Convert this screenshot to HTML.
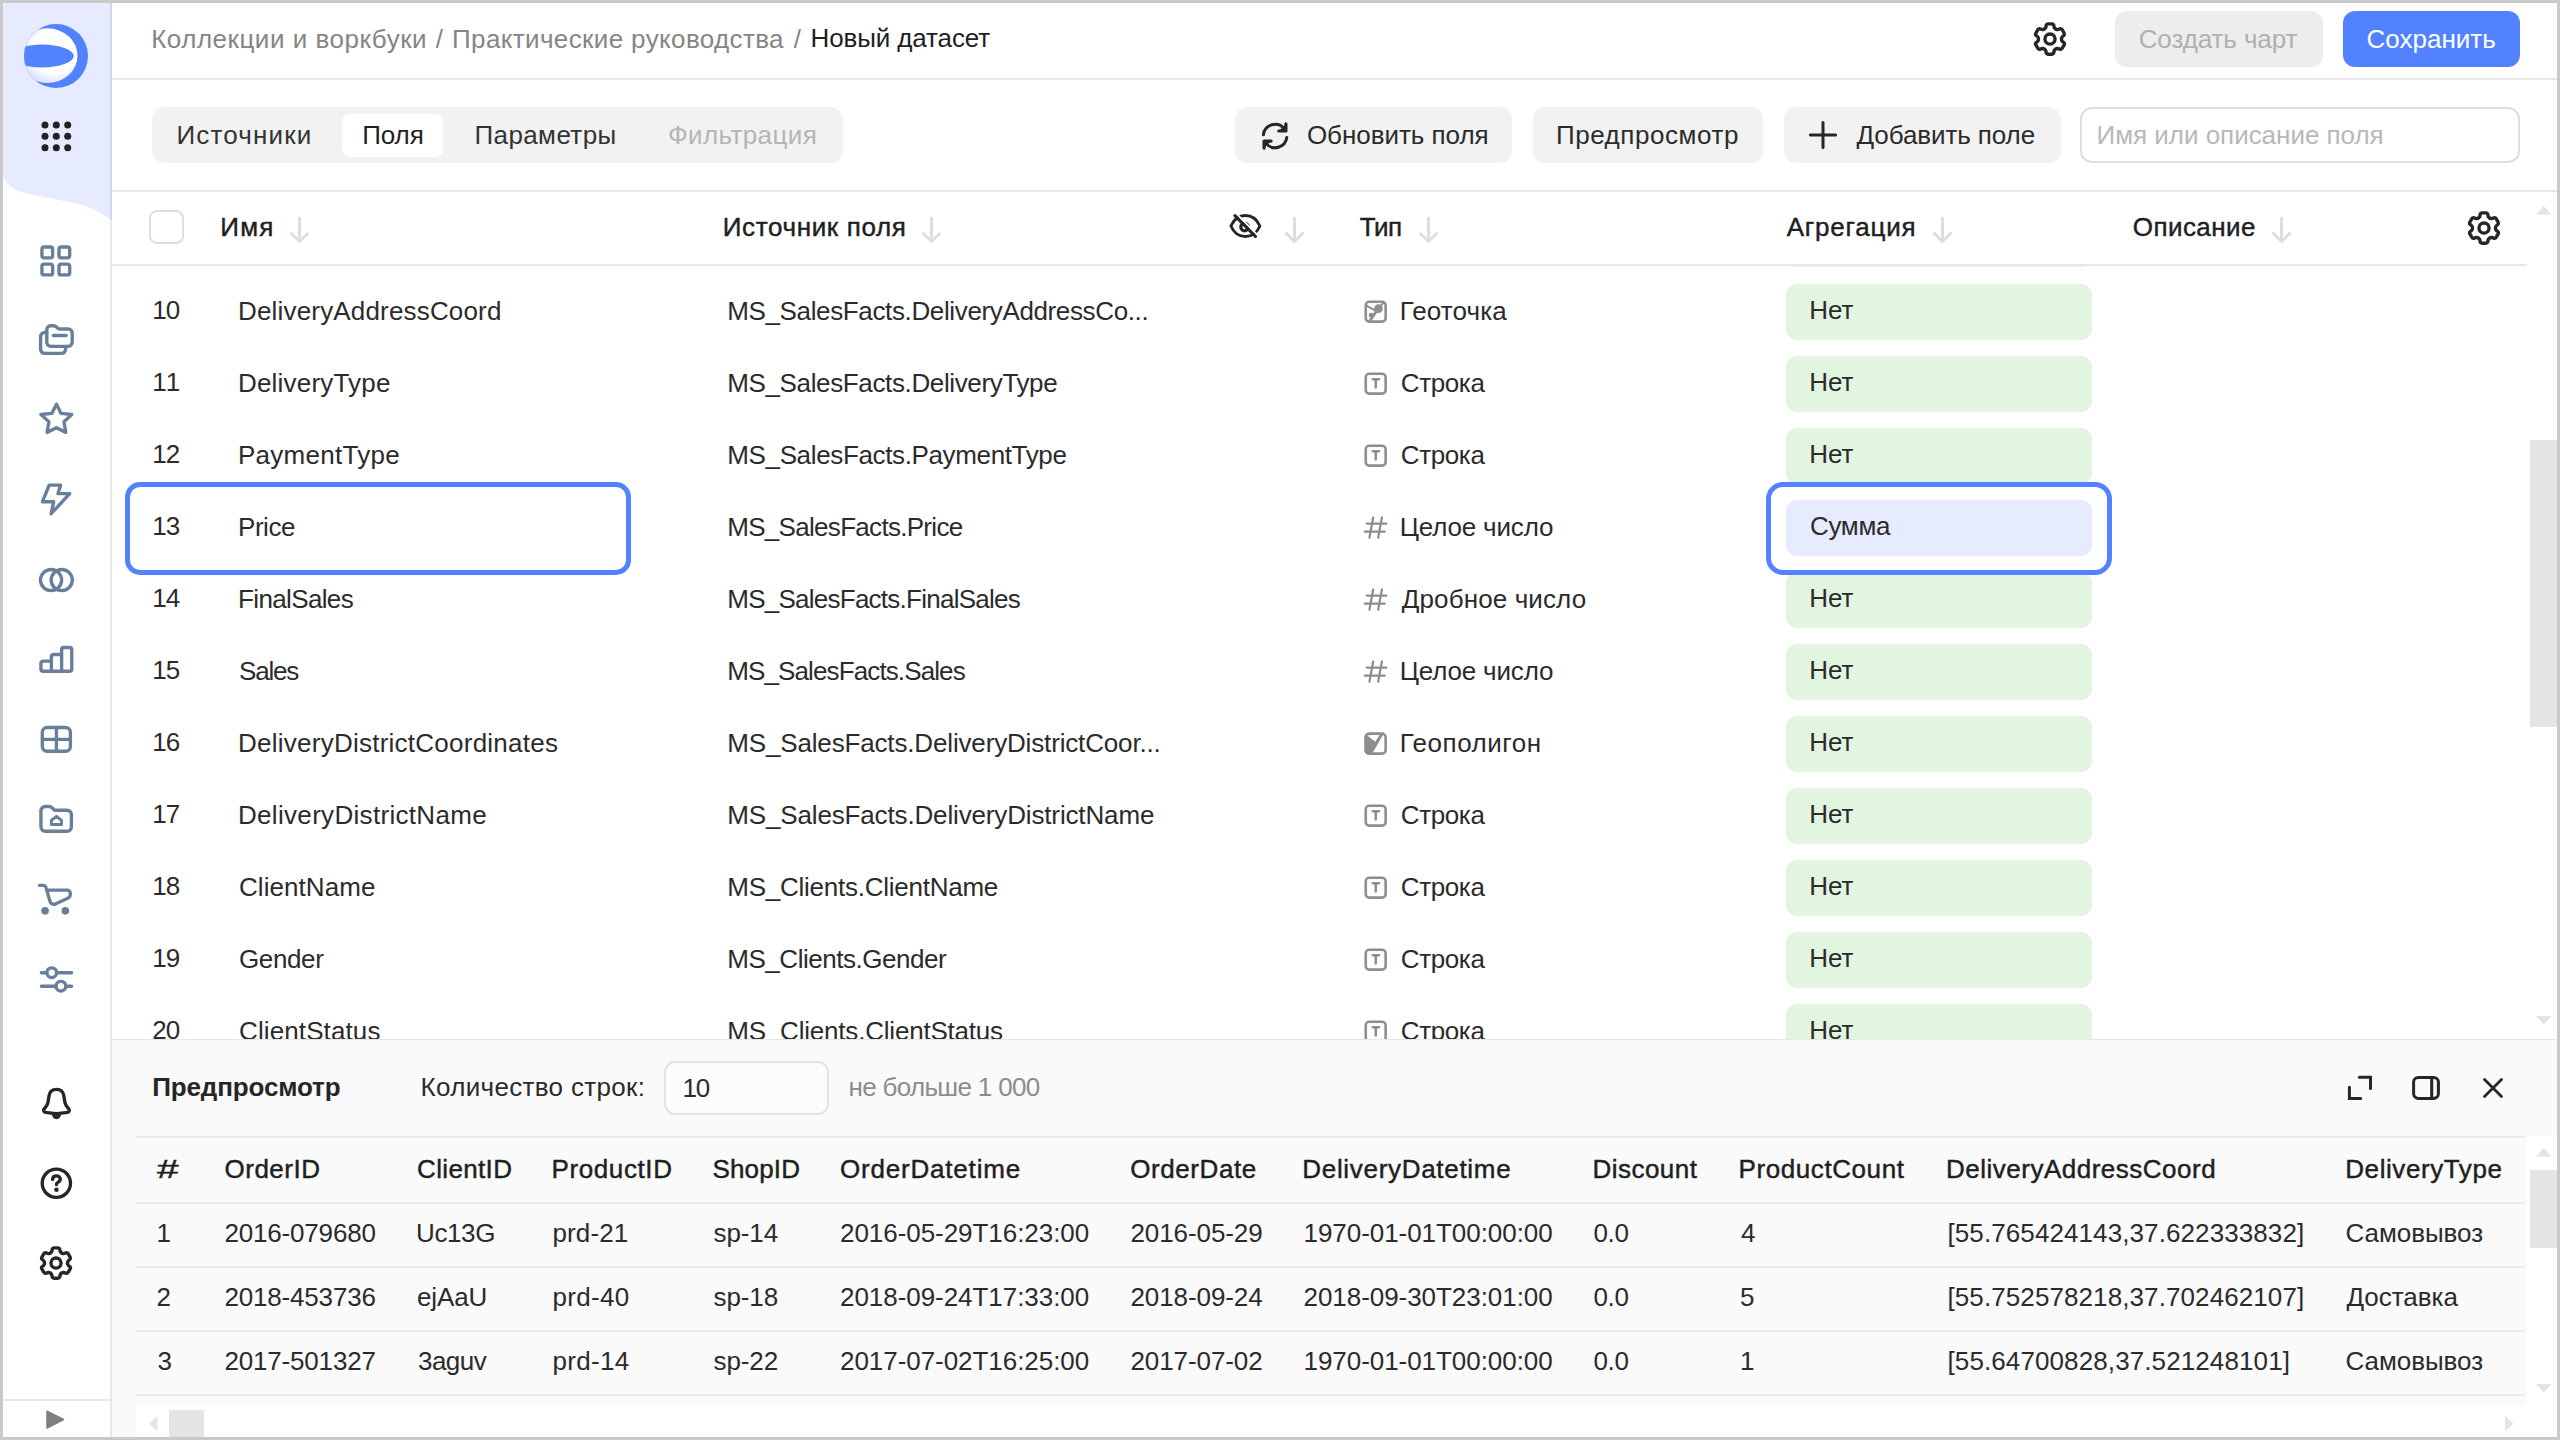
<!DOCTYPE html>
<html lang="ru"><head><meta charset="utf-8"><title>Новый датасет</title>
<style>
html,body{margin:0;padding:0;background:#fff;}
body{width:2560px;height:1440px;position:relative;overflow:hidden;font-family:"Liberation Sans",sans-serif;font-size:26px;line-height:30px;color:#262626;}
.a{position:absolute;}
.t{position:absolute;white-space:nowrap;line-height:30px;}
.ln{position:absolute;background:#e8e8e8;}
.btn{position:absolute;background:#f2f2f2;border-radius:12px;height:56px;top:107px;}
.pill{position:absolute;left:1785.8px;width:306.7px;height:56.4px;border-radius:11px;background:#e1f5e1;}
.hl{position:absolute;box-sizing:border-box;border:5px solid #5282ff;background:#fff;}
svg{position:absolute;overflow:visible;}
.si{stroke:#687f99;fill:none;stroke-width:1.5;stroke-linecap:round;stroke-linejoin:round;}
.bi{stroke:#262626;fill:none;stroke-width:1.5;stroke-linecap:round;stroke-linejoin:round;}
.ar{stroke:#dedede;fill:none;stroke-width:3;stroke-linecap:round;stroke-linejoin:round;}
.ti{stroke:#8e8e8e;fill:none;stroke-width:2.6;stroke-linecap:round;stroke-linejoin:round;}
</style></head><body>
<!-- main white area is body background -->

<!-- ===== sidebar ===== -->
<div class="a" style="left:3px;top:3px;width:108px;height:1434px;background:#fff;"></div>
<svg style="left:0;top:0" width="112" height="230" viewBox="0 0 112 230"><path d="M3 3H111V219.8C105 215 95 209.500 83.3 205.3C70 201.5 50 198.3 33.3 195C15 191 5 186 3 174Z" fill="#e6ebff"/></svg>
<div class="ln" style="left:110px;top:3px;width:2px;height:1434px;background:#e9e9e9;"></div>
<div class="a" style="left:110px;top:3px;width:2px;height:217px;background:#d0d6ec;"></div>
<div class="ln" style="left:3px;top:1398.5px;width:108px;height:2px;"></div>
<!-- logo -->
<svg style="left:24px;top:24px" width="64" height="64" viewBox="0 0 64 64">
<defs><clipPath id="lc"><circle cx="32" cy="32" r="32"/></clipPath>
<radialGradient id="lg" cx="0.62" cy="0.42" r="0.7"><stop offset="0" stop-color="#fff"/><stop offset="0.55" stop-color="#fff"/><stop offset="1" stop-color="#c9d6ff"/></radialGradient></defs>
<circle cx="32" cy="32" r="32" fill="#5282ff"/>
<g clip-path="url(#lc)"><ellipse cx="23.5" cy="31.7" rx="30" ry="27.4" fill="url(#lg)"/>
<ellipse cx="18" cy="32" rx="31.8" ry="11.4" fill="#5282ff"/></g>
</svg>
<!-- 9 dots -->
<svg style="left:38px;top:118px" width="36" height="36" viewBox="0 0 36 36" fill="#222">
<circle cx="7" cy="7" r="3.5"/><circle cx="18.3" cy="7" r="3.5"/><circle cx="29.7" cy="7" r="3.5"/>
<circle cx="7" cy="18.3" r="3.5"/><circle cx="18.3" cy="18.3" r="3.5"/><circle cx="29.7" cy="18.3" r="3.5"/>
<circle cx="7" cy="29.7" r="3.5"/><circle cx="18.3" cy="29.7" r="3.5"/><circle cx="29.7" cy="29.7" r="3.5"/>
</svg>
<!-- sidebar icons (36px box, viewBox 16) -->
<svg class="si" style="left:38px;top:242.6px" width="36" height="36" viewBox="0 0 16 16"><rect x="1.75" y="1.8" width="4.75" height="4.8" rx="1"/><rect x="9.33" y="1.8" width="4.75" height="4.8" rx="1"/><rect x="1.75" y="9.38" width="4.75" height="4.8" rx="1"/><rect x="9.33" y="9.38" width="4.75" height="4.8" rx="1"/></svg>
<svg class="si" style="left:38px;top:321px" width="36" height="36" viewBox="0 0 16 16"><path d="M3.9 3.9a1.8 1.8 0 0 1 1.8-1.8h1.2c.5 0 .95.2 1.3.55l.5.5c.3.3.65.4 1.05.4h3.65a1.8 1.8 0 0 1 1.8 1.8v4.1a1.8 1.8 0 0 1-1.8 1.8H5.7a1.8 1.8 0 0 1-1.8-1.8Z"/><path d="M6.85 6.47h5.65"/><path d="M3.9 5.1H2.95a1.8 1.8 0 0 0-1.8 1.8v5.7a1.8 1.8 0 0 0 1.8 1.8h7.5a1.8 1.8 0 0 0 1.8-1.8v-1.3"/></svg>
<svg class="si" style="left:38px;top:402px" width="36" height="36" viewBox="0 0 16 16"><path d="M8.2 0.95L10.17 5.04L15 5.55L11.55 8.79L12.35 13.5L8.2 11.47L4.05 13.5L4.84 8.79L1.3 5.55L6.22 5.04Z"/></svg>
<svg class="si" style="left:38px;top:482px" width="36" height="36" viewBox="0 0 16 16"><path d="M4.96 1.4H10.05L8.87 5.15H14.1L5.85 14.1L6.95 8.75H2Z"/></svg>
<svg class="si" style="left:38px;top:561.5px" width="36" height="36" viewBox="0 0 16 16"><circle cx="5.8" cy="8.03" r="4.7"/><circle cx="10.55" cy="8.03" r="4.7"/></svg>
<svg class="si" style="left:38px;top:642px" width="36" height="36" viewBox="0 0 16 16"><path d="M5.95 13H2.3a1 1 0 0 1-1-1V9.5a1 1 0 0 1 1-1H5.95M5.95 13V6.55a1 1 0 0 1 1-1H10.5M5.95 13H10.5M10.5 13V3.45a1 1 0 0 1 1-1h2.5a1 1 0 0 1 1 1V12a1 1 0 0 1-1 1H10.5Z"/></svg>
<svg class="si" style="left:38px;top:722px" width="36" height="36" viewBox="0 0 16 16"><rect x="1.92" y="2.47" width="12.48" height="10.55" rx="2.1"/><path d="M8.2 2.47v10.55M1.92 7.72h12.48"/></svg>
<svg class="si" style="left:38px;top:802px" width="36" height="36" viewBox="0 0 16 16"><path d="M1.3 4a2 2 0 0 1 2-2h1.6c.55 0 1.05.2 1.4.6l.55.6c.3.3.7.45 1.1.45h4.9a2 2 0 0 1 2 2v5.35a2 2 0 0 1-2 2H3.3a2 2 0 0 1-2-2Z"/><path d="M8.2 6.35L10.45 8.2V10H5.95V8.2Z" stroke-width="1.3"/></svg>
<svg class="si" style="left:38px;top:882px" width="36" height="36" viewBox="0 0 16 16"><path d="M0.7 1.5H2.2c.7 0 1.25.45 1.4 1.1L5.3 8.5c.25 1.1 1.4 1.7 2.4 1.25L13.2 7.2c.7-.3 1.15-1 1.15-1.75V5a1.4 1.4 0 0 0-1.4-1.4H4.1"/><circle cx="3.14" cy="12.82" r="1.7" fill="#687f99" stroke="none"/><circle cx="12.15" cy="12.82" r="1.7" fill="#687f99" stroke="none"/></svg>
<svg class="si" style="left:38px;top:962px" width="36" height="36" viewBox="0 0 16 16"><path d="M1.5 4.76h2.4M8.3 4.76h6.6M1.5 10.76h6.5M12.35 10.76h2.55"/><circle cx="6.1" cy="4.76" r="2.15"/><circle cx="10.17" cy="10.76" r="2.15"/></svg>
<!-- bottom black icons -->
<svg class="bi" style="left:38px;top:1084.5px" width="36" height="36" viewBox="0 0 16 16"><path d="M8.2 1.95c-1.9 0-3.05 1.2-3.3 2.9l-.45 2.8c-.15.9-.5 1.5-1.05 2.15l-.6.7c-.6.7-.3 1.55.6 1.7 1.6.3 3.2.5 4.8.5s3.200-.2 4.800-.5c.9-.15 1.2-1 .6-1.7l-.6-.7c-.55-.65-.9-1.25-1.05-2.15l-.45-2.8c-.25-1.7-1.4-2.9-3.3-2.9Z"/><path d="M6.5 13.4c.3 1 .95 1.5 1.7 1.5s1.400-.5 1.700-1.500Z" fill="#262626" stroke-width="0.6"/></svg>
<svg class="bi" style="left:38px;top:1164.5px" width="36" height="36" viewBox="0 0 16 16"><circle cx="8.16" cy="8.11" r="6.28"/><path d="M6.5 6.4c0-1 .75-1.55 1.7-1.55s1.700.6 1.700 1.500c0 1.300-1.700 1.200-1.700 2.350"/><circle cx="8.2" cy="11.05" r="1" fill="#262626" stroke="none"/></svg>
<svg style="left:38px;top:1244.5px" width="36" height="36" viewBox="0 0 16 16"><use href="#gear"/></svg>
<!-- play -->
<svg style="left:46px;top:1410px" width="19" height="19" viewBox="0 0 19 19"><path d="M1 1.2L17.5 9.5L1 18Z" fill="#7f7f7f" stroke="#7f7f7f" stroke-width="1.5" stroke-linejoin="round"/></svg>

<!-- ===== header ===== -->
<svg width="0" height="0" style="left:0;top:0"><defs>
<path id="gear" fill="#262626" fill-rule="evenodd" clip-rule="evenodd" d="M7.199 2H8.8a.2.2 0 0 1 .2.2c0 1.808 1.958 2.939 3.524 2.034a.199.199 0 0 1 .271.073l.802 1.388a.199.199 0 0 1-.073.272c-1.566.904-1.566 3.164 0 4.069a.199.199 0 0 1 .073.271l-.802 1.388a.199.199 0 0 1-.271.073C10.958 10.863 9 11.993 9 13.8a.2.2 0 0 1-.199.2H7.2a.199.199 0 0 1-.2-.2c0-1.808-1.958-2.938-3.524-2.034a.199.199 0 0 1-.272-.073l-.8-1.388a.199.199 0 0 1 .072-.271c1.566-.905 1.566-3.165 0-4.07a.199.199 0 0 1-.073-.271l.801-1.388a.199.199 0 0 1 .272-.073C5.042 5.138 7 4.007 7 2.2c0-.11.089-.199.199-.199ZM5.5 2.2c0-.94.76-1.7 1.699-1.7H8.8c.94 0 1.7.76 1.7 1.7a.85.85 0 0 0 1.274.735 1.699 1.699 0 0 1 2.32.622l.802 1.388c.469.813.19 1.851-.622 2.32a.85.85 0 0 0 0 1.472 1.7 1.7 0 0 1 .622 2.32l-.802 1.388a1.699 1.699 0 0 1-2.32.622.85.85 0 0 0-1.274.735c0 .939-.76 1.7-1.699 1.7H7.2a1.7 1.7 0 0 1-1.699-1.7.85.85 0 0 0-1.274-.735 1.698 1.698 0 0 1-2.32-.622l-.802-1.388a1.699 1.699 0 0 1 .622-2.32.85.85 0 0 0 0-1.471 1.699 1.699 0 0 1-.622-2.321l.801-1.388a1.699 1.699 0 0 1 2.32-.622A.85.85 0 0 0 5.5 2.2Zm4 5.8a1.5 1.5 0 1 1-3 0 1.5 1.5 0 0 1 3 0ZM11 8a3 3 0 1 1-6 0 3 3 0 0 1 6 0Z"/>
<g id="arr"><path class="ar" d="M9.5 0.9V24.5M1.5 16.5l8 8l8-8"/></g>
</defs></svg>
<div class="ln" style="left:112px;top:78px;width:2445px;height:2px;"></div>
<svg style="left:2032px;top:20.5px" width="36" height="36" viewBox="0 0 16 16"><use href="#gear"/></svg>
<div class="a" style="left:2115px;top:11px;width:208px;height:56px;border-radius:12px;background:#ededed;"></div>
<div class="a" style="left:2342.5px;top:11px;width:177.5px;height:56px;border-radius:12px;background:#5282ff;"></div>

<!-- ===== toolbar ===== -->
<div class="a" style="left:152px;top:107px;width:691px;height:56px;border-radius:13px;background:#f2f2f2;"></div>
<div class="a" style="left:342px;top:113.5px;width:101px;height:43px;border-radius:8px;background:#fff;"></div>
<div class="btn" style="left:1235px;width:277px;"></div>
<div class="btn" style="left:1533px;width:230px;"></div>
<div class="btn" style="left:1784px;width:276.5px;"></div>
<div class="a" style="left:2080px;top:107px;width:439.5px;height:56px;box-sizing:border-box;border:2px solid #dedede;border-radius:12px;background:#fff;"></div>
<!-- refresh icon -->
<svg class="bi" style="left:1259.1px;top:120px" width="32" height="32" viewBox="0 0 16 16"><path d="M2.2 7.4A5.9 5.9 0 0 1 12.7 4.4M13.9 8.7A5.9 5.9 0 0 1 3.5 11.7"/><path d="M13.45 1.95V5.5H9.9M2.55 14.05V10.55H6.05" stroke-width="1.6" fill="#262626"/></svg>
<!-- plus -->
<svg class="bi" style="left:1806.6px;top:119.3px" width="32" height="32" viewBox="0 0 16 16"><path d="M8 1.7v12.6M1.700 8h12.600"/></svg>
<div class="ln" style="left:112px;top:190px;width:2445px;height:2px;"></div>

<!-- ===== fields table ===== -->
<!-- pills -->
<div class="pill" style="top:211.5px;height:55.8px;"></div>
<div class="pill" style="top:283.5px;"></div>
<div class="pill" style="top:355.5px;"></div>
<div class="pill" style="top:427.5px;"></div>
<div class="pill" style="top:571.5px;"></div>
<div class="pill" style="top:643.5px;"></div>
<div class="pill" style="top:715.5px;"></div>
<div class="pill" style="top:787.5px;"></div>
<div class="pill" style="top:859.5px;"></div>
<div class="pill" style="top:931.5px;"></div>
<div class="pill" style="top:1003.5px;"></div>
<!-- header (covers scrolled rows) -->
<div class="a" style="left:112px;top:192px;width:2414px;height:72px;background:#fff;"></div>
<div class="ln" style="left:112px;top:264px;width:2414.5px;height:2px;"></div>
<div class="a" style="left:149px;top:210px;width:34.5px;height:34px;box-sizing:border-box;border:2px solid #dedede;border-radius:8px;background:#fff;"></div>
<svg style="left:289.7px;top:216.5px" width="19" height="26"><use href="#arr"/></svg>
<svg style="left:921.7px;top:216.5px" width="19" height="26"><use href="#arr"/></svg>
<svg style="left:1284.9px;top:216.5px" width="19" height="26"><use href="#arr"/></svg>
<svg style="left:1419.1px;top:216.5px" width="19" height="26"><use href="#arr"/></svg>
<svg style="left:1932.7px;top:216.5px" width="19" height="26"><use href="#arr"/></svg>
<svg style="left:2271.7px;top:216.5px" width="19" height="26"><use href="#arr"/></svg>
<!-- eye slash -->
<svg class="bi" style="left:1226.5px;top:208px;stroke-width:2.9" width="36" height="36" viewBox="0 0 36 36"><path d="M3.9 18C7 10.8 12 7.45 18.4 7.45S29.8 10.8 32.9 18C29.800 25.200 24.800 28.500 18.400 28.500S7 25.200 3.900 18Z"/><circle cx="17.6" cy="19" r="3.8" stroke-width="3.2"/><path d="M8.9 5.2L31 27.600" stroke="#fff" stroke-width="1.900" stroke-linecap="butt"/><path d="M7.9 7.600L28.500 28.500" stroke-width="3.100"/></svg>
<svg style="left:2465.5px;top:209.5px" width="36" height="36" viewBox="0 0 16 16"><use href="#gear"/></svg>
<!-- scrollbar fields -->
<svg style="left:2536px;top:206px" width="16" height="9"><path d="M0 8.5L7.7 0L15.4 8.5Z" fill="#e4e4e4"/></svg>
<svg style="left:2536px;top:1016px" width="16" height="9"><path d="M0 0L7.7 8.5L15.4 0Z" fill="#e4e4e4"/></svg>
<div class="a" style="left:2529.5px;top:440px;width:27.5px;height:287px;background:#e4e4e4;"></div>

<!-- type icons -->
<svg class="ti" style="left:1363.8px;top:300.35px" width="23.4" height="23.4" viewBox="0 0 23.4 23.4"><rect x="1.75" y="1.8" width="19.9" height="19.8" rx="3.4"/><path d="M2.9 5.9L10.4 10.1M19.5 2.6L14.5 8.6" stroke-width="2"/><circle cx="14.5" cy="8.65" r="4.3" fill="#8e8e8e" stroke="none"/><circle cx="7" cy="15.1" r="2.3" fill="#8e8e8e" stroke="none"/><path d="M14 9L6 20.500" stroke-width="3" stroke-linecap="butt"/></svg>
<svg class="ti" style="left:1363.8px;top:372.35px" width="23.4" height="23.4" viewBox="0 0 23.4 23.4"><rect x="1.75" y="1.8" width="19.9" height="19.8" rx="3.4"/><path d="M8.7 7.2H15M11.75 7.200V15.500" stroke-width="2.5"/></svg>
<svg class="ti" style="left:1363.8px;top:444.35px" width="23.4" height="23.4" viewBox="0 0 23.4 23.4"><rect x="1.75" y="1.8" width="19.9" height="19.8" rx="3.4"/><path d="M8.7 7.2H15M11.75 7.200V15.500" stroke-width="2.5"/></svg>
<svg class="ti" style="left:1363.8px;top:516.35px" width="23.4" height="23.4" viewBox="0 0 23.4 23.4"><path d="M9.19 1.43L5.42 21.73M17.94 1.43L14.17 21.73M2.75 7.7H22.43M0.8 15.65H20.7" stroke-width="2.2"/></svg>
<svg class="ti" style="left:1363.8px;top:588.35px" width="23.4" height="23.4" viewBox="0 0 23.4 23.4"><path d="M9.19 1.43L5.42 21.73M17.94 1.43L14.17 21.73M2.75 7.7H22.43M0.8 15.65H20.7" stroke-width="2.2"/></svg>
<svg class="ti" style="left:1363.8px;top:660.35px" width="23.4" height="23.4" viewBox="0 0 23.4 23.4"><path d="M9.19 1.43L5.42 21.73M17.94 1.43L14.17 21.73M2.75 7.7H22.43M0.8 15.65H20.7" stroke-width="2.2"/></svg>
<svg class="ti" style="left:1363.8px;top:732.35px" width="23.4" height="23.4" viewBox="0 0 23.4 23.4"><defs><clipPath id="pc"><rect x="0.4" y="0.4" width="22.6" height="22.6" rx="4.7"/></clipPath></defs><g clip-path="url(#pc)"><path d="M0 0H20.6L7.2 23.400H0Z" fill="#8e8e8e" stroke="none"/><path d="M2.87 3.37L15.75 2.84L11.38 9.74Z" fill="#fff" stroke="none"/></g><rect x="1.75" y="1.8" width="19.9" height="19.8" rx="3.4"/></svg>
<svg class="ti" style="left:1363.8px;top:804.35px" width="23.4" height="23.4" viewBox="0 0 23.4 23.4"><rect x="1.75" y="1.8" width="19.9" height="19.8" rx="3.4"/><path d="M8.7 7.2H15M11.75 7.200V15.500" stroke-width="2.5"/></svg>
<svg class="ti" style="left:1363.8px;top:876.35px" width="23.4" height="23.4" viewBox="0 0 23.4 23.4"><rect x="1.75" y="1.8" width="19.9" height="19.8" rx="3.4"/><path d="M8.7 7.2H15M11.75 7.200V15.500" stroke-width="2.5"/></svg>
<svg class="ti" style="left:1363.8px;top:948.35px" width="23.4" height="23.4" viewBox="0 0 23.4 23.4"><rect x="1.75" y="1.8" width="19.9" height="19.8" rx="3.4"/><path d="M8.7 7.2H15M11.75 7.200V15.500" stroke-width="2.5"/></svg>
<svg class="ti" style="left:1363.8px;top:1020.35px" width="23.4" height="23.4" viewBox="0 0 23.4 23.4"><rect x="1.75" y="1.8" width="19.9" height="19.8" rx="3.4"/><path d="M8.7 7.2H15M11.75 7.200V15.500" stroke-width="2.5"/></svg>
<!-- highlight boxes -->
<div class="hl" style="left:125px;top:482px;width:506px;height:92.5px;border-radius:15px;"></div>
<div class="hl" style="left:1766.3px;top:482px;width:345.5px;height:92.5px;border-radius:17px;"></div>
<div class="pill" style="top:499.500px;background:#e6ebff;"></div>
<span class="t" style="left:152.25px;top:295.29px;color:#2b2b2b;letter-spacing:-1.010px;">10</span>
<span class="t" style="left:238.00px;top:296.19px;color:#2b2b2b;letter-spacing:0.174px;">DeliveryAddressCoord</span>
<span class="t" style="left:727.25px;top:296.19px;color:#2b2b2b;letter-spacing:-0.365px;">MS_SalesFacts.DeliveryAddressCo...</span>
<span class="t" style="left:1399.75px;top:296.19px;color:#2b2b2b;letter-spacing:0.109px;">Геоточка</span>
<span class="t" style="left:152.25px;top:367.29px;color:#2b2b2b;letter-spacing:0.920px;">11</span>
<span class="t" style="left:238.00px;top:368.19px;color:#2b2b2b;letter-spacing:0.194px;">DeliveryType</span>
<span class="t" style="left:727.25px;top:368.19px;color:#2b2b2b;letter-spacing:-0.366px;">MS_SalesFacts.DeliveryType</span>
<span class="t" style="left:1400.75px;top:368.19px;color:#2b2b2b;letter-spacing:-0.370px;">Строка</span>
<span class="t" style="left:152.25px;top:439.29px;color:#2b2b2b;letter-spacing:-1.010px;">12</span>
<span class="t" style="left:238.00px;top:440.19px;color:#2b2b2b;letter-spacing:0.269px;">PaymentType</span>
<span class="t" style="left:727.25px;top:440.19px;color:#2b2b2b;letter-spacing:-0.358px;">MS_SalesFacts.PaymentType</span>
<span class="t" style="left:1400.75px;top:440.19px;color:#2b2b2b;letter-spacing:-0.370px;">Строка</span>
<span class="t" style="left:152.25px;top:511.29px;color:#2b2b2b;letter-spacing:-1.010px;">13</span>
<span class="t" style="left:238.00px;top:512.19px;color:#2b2b2b;letter-spacing:-0.457px;">Price</span>
<span class="t" style="left:727.25px;top:512.19px;color:#2b2b2b;letter-spacing:-0.701px;">MS_SalesFacts.Price</span>
<span class="t" style="left:1399.75px;top:512.19px;color:#2b2b2b;letter-spacing:-0.177px;">Целое число</span>
<span class="t" style="left:152.25px;top:583.29px;color:#2b2b2b;letter-spacing:-1.010px;">14</span>
<span class="t" style="left:238.00px;top:584.19px;color:#2b2b2b;letter-spacing:-0.633px;">FinalSales</span>
<span class="t" style="left:727.25px;top:584.19px;color:#2b2b2b;letter-spacing:-0.749px;">MS_SalesFacts.FinalSales</span>
<span class="t" style="left:1401.75px;top:584.19px;color:#2b2b2b;letter-spacing:0.125px;">Дробное число</span>
<span class="t" style="left:152.25px;top:655.29px;color:#2b2b2b;letter-spacing:-1.010px;">15</span>
<span class="t" style="left:239.00px;top:656.19px;color:#2b2b2b;letter-spacing:-1.200px;">Sales</span>
<span class="t" style="left:727.25px;top:656.19px;color:#2b2b2b;letter-spacing:-0.882px;">MS_SalesFacts.Sales</span>
<span class="t" style="left:1399.75px;top:656.19px;color:#2b2b2b;letter-spacing:-0.177px;">Целое число</span>
<span class="t" style="left:152.25px;top:727.29px;color:#2b2b2b;letter-spacing:-1.010px;">16</span>
<span class="t" style="left:238.00px;top:728.19px;color:#2b2b2b;letter-spacing:0.247px;">DeliveryDistrictCoordinates</span>
<span class="t" style="left:727.25px;top:728.19px;color:#2b2b2b;letter-spacing:-0.157px;">MS_SalesFacts.DeliveryDistrictCoor...</span>
<span class="t" style="left:1399.75px;top:728.19px;color:#2b2b2b;letter-spacing:0.517px;">Геополигон</span>
<span class="t" style="left:152.25px;top:799.29px;color:#2b2b2b;letter-spacing:-1.010px;">17</span>
<span class="t" style="left:238.00px;top:800.19px;color:#2b2b2b;letter-spacing:0.314px;">DeliveryDistrictName</span>
<span class="t" style="left:727.25px;top:800.19px;color:#2b2b2b;letter-spacing:-0.148px;">MS_SalesFacts.DeliveryDistrictName</span>
<span class="t" style="left:1400.75px;top:800.19px;color:#2b2b2b;letter-spacing:-0.370px;">Строка</span>
<span class="t" style="left:152.25px;top:871.29px;color:#2b2b2b;letter-spacing:-1.010px;">18</span>
<span class="t" style="left:239.00px;top:872.19px;color:#2b2b2b;letter-spacing:0.065px;">ClientName</span>
<span class="t" style="left:727.25px;top:872.19px;color:#2b2b2b;letter-spacing:-0.249px;">MS_Clients.ClientName</span>
<span class="t" style="left:1400.75px;top:872.19px;color:#2b2b2b;letter-spacing:-0.370px;">Строка</span>
<span class="t" style="left:152.25px;top:943.29px;color:#2b2b2b;letter-spacing:-1.010px;">19</span>
<span class="t" style="left:239.00px;top:944.19px;color:#2b2b2b;letter-spacing:-0.373px;">Gender</span>
<span class="t" style="left:727.25px;top:944.19px;color:#2b2b2b;letter-spacing:-0.461px;">MS_Clients.Gender</span>
<span class="t" style="left:1400.75px;top:944.19px;color:#2b2b2b;letter-spacing:-0.370px;">Строка</span>
<span class="t" style="left:152.25px;top:1015.29px;color:#2b2b2b;letter-spacing:-1.010px;">20</span>
<span class="t" style="left:239.00px;top:1016.19px;color:#2b2b2b;letter-spacing:0.115px;">ClientStatus</span>
<span class="t" style="left:727.25px;top:1016.19px;color:#2b2b2b;letter-spacing:-0.204px;">MS_Clients.ClientStatus</span>
<span class="t" style="left:1400.75px;top:1016.19px;color:#2b2b2b;letter-spacing:-0.370px;">Строка</span>
<span class="t" style="left:1809.25px;top:295.29px;color:#2b2b2b;letter-spacing:-0.087px;">Нет</span>
<span class="t" style="left:1809.25px;top:367.29px;color:#2b2b2b;letter-spacing:-0.087px;">Нет</span>
<span class="t" style="left:1809.25px;top:439.29px;color:#2b2b2b;letter-spacing:-0.087px;">Нет</span>
<span class="t" style="left:1810.00px;top:511.29px;color:#2b2b2b;letter-spacing:-0.321px;">Сумма</span>
<span class="t" style="left:1809.25px;top:583.29px;color:#2b2b2b;letter-spacing:-0.087px;">Нет</span>
<span class="t" style="left:1809.25px;top:655.29px;color:#2b2b2b;letter-spacing:-0.087px;">Нет</span>
<span class="t" style="left:1809.25px;top:727.29px;color:#2b2b2b;letter-spacing:-0.087px;">Нет</span>
<span class="t" style="left:1809.25px;top:799.29px;color:#2b2b2b;letter-spacing:-0.087px;">Нет</span>
<span class="t" style="left:1809.25px;top:871.29px;color:#2b2b2b;letter-spacing:-0.087px;">Нет</span>
<span class="t" style="left:1809.25px;top:943.29px;color:#2b2b2b;letter-spacing:-0.087px;">Нет</span>
<span class="t" style="left:1809.25px;top:1015.29px;color:#2b2b2b;letter-spacing:-0.087px;">Нет</span>

<!-- ===== preview panel ===== -->
<div class="a" style="left:112px;top:1039px;width:2445px;height:398px;background:#fafafa;"></div>
<div class="ln" style="left:112px;top:1039px;width:2445px;height:1px;background:#e6e6e6;"></div>
<div class="a" style="left:664px;top:1061px;width:164.5px;height:53.5px;box-sizing:border-box;border:2px solid #e3e3e3;border-radius:11px;background:#fcfcfc;"></div>
<!-- panel icons -->
<svg class="bi" style="left:2344px;top:1072px" width="32" height="32" viewBox="0 0 16 16"><path d="M7.65 2.650H13.250V8.250M2.700 7.650V13.250H8.350" stroke-linejoin="miter"/></svg>
<svg class="bi" style="left:2409.500px;top:1072px" width="32" height="32" viewBox="0 0 16 16"><rect x="1.8" y="2.750" width="12.400" height="10.450" rx="2.400"/><path d="M10.850 2.750V13.200"/></svg>
<svg class="bi" style="left:2476.900px;top:1072.100px" width="32" height="32" viewBox="0 0 16 16"><path d="M3.750 3.750l8.500 8.500M12.250 3.750l-8.500 8.500" stroke-width="1.400"/></svg>
<!-- table lines -->
<div class="ln" style="left:203px;top:1137.5px;width:1px;height:256px;background:#f8f8f8;"></div>
<div class="ln" style="left:395.5px;top:1137.5px;width:1px;height:256px;background:#f8f8f8;"></div>
<div class="ln" style="left:531.5px;top:1137.5px;width:1px;height:256px;background:#f8f8f8;"></div>
<div class="ln" style="left:691px;top:1137.5px;width:1px;height:256px;background:#f8f8f8;"></div>
<div class="ln" style="left:819.5px;top:1137.5px;width:1px;height:256px;background:#f8f8f8;"></div>
<div class="ln" style="left:1109px;top:1137.5px;width:1px;height:256px;background:#f8f8f8;"></div>
<div class="ln" style="left:1282.5px;top:1137.5px;width:1px;height:256px;background:#f8f8f8;"></div>
<div class="ln" style="left:1571px;top:1137.5px;width:1px;height:256px;background:#f8f8f8;"></div>
<div class="ln" style="left:1718px;top:1137.5px;width:1px;height:256px;background:#f8f8f8;"></div>
<div class="ln" style="left:1925px;top:1137.5px;width:1px;height:256px;background:#f8f8f8;"></div>
<div class="ln" style="left:2323.5px;top:1137.5px;width:1px;height:256px;background:#f8f8f8;"></div>
<div class="ln" style="left:136px;top:1135.5px;width:2390px;height:2px;background:#ebebeb;"></div>
<div class="ln" style="left:136px;top:1201.5px;width:2390px;height:2px;background:#ebebeb;"></div>
<div class="ln" style="left:136px;top:1265.5px;width:2390px;height:2px;background:#ebebeb;"></div>
<div class="ln" style="left:136px;top:1329.5px;width:2390px;height:2px;background:#ebebeb;"></div>
<div class="ln" style="left:136px;top:1393.5px;width:2390px;height:2px;background:#ebebeb;"></div>
<!-- scrollbars -->
<div class="a" style="left:2526px;top:1135.5px;width:31px;height:302px;background:#fff;"></div>
<div class="a" style="left:136px;top:1406px;width:2421px;height:31px;background:#fff;"></div>
<svg style="left:2536px;top:1148px" width="16" height="9"><path d="M0 8.5L7.7 0L15.4 8.5Z" fill="#e4e4e4"/></svg>
<svg style="left:2536px;top:1384px" width="16" height="9"><path d="M0 0L7.7 8.5L15.4 0Z" fill="#e4e4e4"/></svg>
<div class="a" style="left:2529.5px;top:1169.5px;width:27.5px;height:78px;background:#e4e4e4;"></div>
<svg style="left:148.5px;top:1416px" width="9" height="16"><path d="M8.5 0L0 7.7L8.5 15.4Z" fill="#e4e4e4"/></svg>
<svg style="left:2505px;top:1416px" width="9" height="16"><path d="M0 0L8.5 7.7L0 15.4Z" fill="#e4e4e4"/></svg>
<div class="a" style="left:169px;top:1409.5px;width:35px;height:27.5px;background:#e4e4e4;"></div>
<span class="t" style="left:151.20px;top:23.99px;color:#858585;letter-spacing:0.510px;">Коллекции и воркбуки</span>
<span class="t" style="left:435.70px;top:23.99px;color:#858585;">/</span>
<span class="t" style="left:452.00px;top:23.99px;color:#858585;letter-spacing:0.370px;">Практические руководства</span>
<span class="t" style="left:793.80px;top:23.99px;color:#858585;">/</span>
<span class="t" style="left:810.50px;top:22.79px;color:#1f1f1f;letter-spacing:-0.118px;">Новый датасет</span>
<span class="t" style="left:2138.70px;top:23.69px;color:#b0b0b0;letter-spacing:-0.102px;">Создать чарт</span>
<span class="t" style="left:2366.60px;top:23.69px;color:#ffffff;letter-spacing:-0.007px;">Сохранить</span>
<span class="t" style="left:176.50px;top:119.99px;color:#333;letter-spacing:1.151px;">Источники</span>
<span class="t" style="left:362.20px;top:119.99px;color:#1f1f1f;letter-spacing:-0.082px;">Поля</span>
<span class="t" style="left:474.50px;top:119.99px;color:#333;letter-spacing:0.387px;">Параметры</span>
<span class="t" style="left:667.90px;top:119.99px;color:#b5b5b5;letter-spacing:0.398px;">Фильтрация</span>
<span class="t" style="left:1306.90px;top:119.99px;color:#2b2b2b;letter-spacing:-0.032px;">Обновить поля</span>
<span class="t" style="left:1555.90px;top:119.99px;color:#2b2b2b;letter-spacing:0.566px;">Предпросмотр</span>
<span class="t" style="left:1856.50px;top:119.99px;color:#2b2b2b;letter-spacing:-0.089px;">Добавить поле</span>
<span class="t" style="left:2096.50px;top:119.79px;color:#b8b8b8;letter-spacing:-0.022px;">Имя или описание поля</span>
<span class="t" style="left:220.25px;top:211.79px;color:#1f1f1f;-webkit-text-stroke:0.45px;letter-spacing:1.194px;">Имя</span>
<span class="t" style="left:722.75px;top:211.79px;color:#1f1f1f;-webkit-text-stroke:0.45px;letter-spacing:0.633px;">Источник поля</span>
<span class="t" style="left:1359.75px;top:211.79px;color:#1f1f1f;-webkit-text-stroke:0.45px;letter-spacing:-0.531px;">Тип</span>
<span class="t" style="left:1786.70px;top:211.79px;color:#1f1f1f;-webkit-text-stroke:0.45px;letter-spacing:0.783px;">Агрегация</span>
<span class="t" style="left:2132.80px;top:211.79px;color:#1f1f1f;-webkit-text-stroke:0.45px;letter-spacing:0.419px;">Описание</span>
<span class="t" style="left:152.25px;top:1071.99px;color:#262626;font-weight:700;letter-spacing:-0.139px;">Предпросмотр</span>
<span class="t" style="left:420.50px;top:1071.99px;color:#2b2b2b;letter-spacing:0.322px;">Количество строк:</span>
<span class="t" style="left:682.50px;top:1073.19px;color:#2b2b2b;letter-spacing:-1.200px;">10</span>
<span class="t" style="left:848.50px;top:1071.99px;color:#8c8c8c;letter-spacing:-0.677px;">не больше 1 000</span>
<span class="t" style="left:157.00px;top:1154.39px;color:#1f1f1f;-webkit-text-stroke:0.45px;transform:scaleX(1.5);transform-origin:0 0;">#</span>
<span class="t" style="left:224.50px;top:1154.39px;color:#1f1f1f;-webkit-text-stroke:0.45px;letter-spacing:0.503px;">OrderID</span>
<span class="t" style="left:417.00px;top:1154.39px;color:#1f1f1f;-webkit-text-stroke:0.45px;letter-spacing:0.358px;">ClientID</span>
<span class="t" style="left:551.50px;top:1154.39px;color:#1f1f1f;-webkit-text-stroke:0.45px;letter-spacing:0.609px;">ProductID</span>
<span class="t" style="left:712.50px;top:1154.39px;color:#1f1f1f;-webkit-text-stroke:0.45px;letter-spacing:0.151px;">ShopID</span>
<span class="t" style="left:840.00px;top:1154.39px;color:#1f1f1f;-webkit-text-stroke:0.45px;letter-spacing:0.805px;">OrderDatetime</span>
<span class="t" style="left:1130.25px;top:1154.39px;color:#1f1f1f;-webkit-text-stroke:0.45px;letter-spacing:0.566px;">OrderDate</span>
<span class="t" style="left:1302.25px;top:1154.39px;color:#1f1f1f;-webkit-text-stroke:0.45px;letter-spacing:0.698px;">DeliveryDatetime</span>
<span class="t" style="left:1592.50px;top:1154.39px;color:#1f1f1f;-webkit-text-stroke:0.45px;letter-spacing:0.467px;">Discount</span>
<span class="t" style="left:1738.50px;top:1154.39px;color:#1f1f1f;-webkit-text-stroke:0.45px;letter-spacing:0.585px;">ProductCount</span>
<span class="t" style="left:1946.00px;top:1154.39px;color:#1f1f1f;-webkit-text-stroke:0.45px;letter-spacing:0.503px;">DeliveryAddressCoord</span>
<span class="t" style="left:2345.25px;top:1154.39px;color:#1f1f1f;-webkit-text-stroke:0.45px;letter-spacing:0.581px;">DeliveryType</span>
<span class="t" style="left:156.50px;top:1217.79px;color:#2b2b2b;">1</span>
<span class="t" style="left:224.50px;top:1217.79px;color:#2b2b2b;letter-spacing:-0.185px;">2016-079680</span>
<span class="t" style="left:416.00px;top:1217.79px;color:#2b2b2b;letter-spacing:-0.374px;">Uc13G</span>
<span class="t" style="left:552.50px;top:1217.79px;color:#2b2b2b;letter-spacing:0.101px;">prd-21</span>
<span class="t" style="left:713.50px;top:1217.79px;color:#2b2b2b;letter-spacing:-0.095px;">sp-14</span>
<span class="t" style="left:840.00px;top:1217.79px;color:#2b2b2b;letter-spacing:-0.051px;">2016-05-29T16:23:00</span>
<span class="t" style="left:1130.50px;top:1217.79px;color:#2b2b2b;letter-spacing:-0.093px;">2016-05-29</span>
<span class="t" style="left:1303.50px;top:1217.79px;color:#2b2b2b;letter-spacing:-0.051px;">1970-01-01T00:00:00</span>
<span class="t" style="left:1593.50px;top:1217.79px;color:#2b2b2b;letter-spacing:-0.367px;">0.0</span>
<span class="t" style="left:1741.00px;top:1217.79px;color:#2b2b2b;">4</span>
<span class="t" style="left:1947.50px;top:1217.79px;color:#2b2b2b;letter-spacing:0.094px;">[55.765424143,37.622333832]</span>
<span class="t" style="left:2345.50px;top:1217.79px;color:#2b2b2b;letter-spacing:-0.044px;">Самовывоз</span>
<span class="t" style="left:156.50px;top:1281.99px;color:#2b2b2b;">2</span>
<span class="t" style="left:224.50px;top:1281.99px;color:#2b2b2b;letter-spacing:-0.185px;">2018-453736</span>
<span class="t" style="left:417.00px;top:1281.99px;color:#2b2b2b;letter-spacing:-0.147px;">ejAaU</span>
<span class="t" style="left:552.50px;top:1281.99px;color:#2b2b2b;letter-spacing:0.301px;">prd-40</span>
<span class="t" style="left:713.50px;top:1281.99px;color:#2b2b2b;letter-spacing:-0.095px;">sp-18</span>
<span class="t" style="left:840.00px;top:1281.99px;color:#2b2b2b;letter-spacing:-0.051px;">2018-09-24T17:33:00</span>
<span class="t" style="left:1130.50px;top:1281.99px;color:#2b2b2b;letter-spacing:-0.093px;">2018-09-24</span>
<span class="t" style="left:1303.50px;top:1281.99px;color:#2b2b2b;letter-spacing:-0.051px;">2018-09-30T23:01:00</span>
<span class="t" style="left:1593.50px;top:1281.99px;color:#2b2b2b;letter-spacing:-0.367px;">0.0</span>
<span class="t" style="left:1740.00px;top:1281.99px;color:#2b2b2b;">5</span>
<span class="t" style="left:1947.50px;top:1281.99px;color:#2b2b2b;letter-spacing:0.094px;">[55.752578218,37.702462107]</span>
<span class="t" style="left:2346.50px;top:1281.99px;color:#2b2b2b;letter-spacing:-0.035px;">Доставка</span>
<span class="t" style="left:157.50px;top:1346.19px;color:#2b2b2b;">3</span>
<span class="t" style="left:224.50px;top:1346.19px;color:#2b2b2b;letter-spacing:-0.185px;">2017-501327</span>
<span class="t" style="left:418.00px;top:1346.19px;color:#2b2b2b;letter-spacing:-0.535px;">3aguv</span>
<span class="t" style="left:552.50px;top:1346.19px;color:#2b2b2b;letter-spacing:0.301px;">prd-14</span>
<span class="t" style="left:713.50px;top:1346.19px;color:#2b2b2b;letter-spacing:-0.095px;">sp-22</span>
<span class="t" style="left:840.00px;top:1346.19px;color:#2b2b2b;letter-spacing:-0.051px;">2017-07-02T16:25:00</span>
<span class="t" style="left:1130.50px;top:1346.19px;color:#2b2b2b;letter-spacing:-0.093px;">2017-07-02</span>
<span class="t" style="left:1303.50px;top:1346.19px;color:#2b2b2b;letter-spacing:-0.051px;">1970-01-01T00:00:00</span>
<span class="t" style="left:1593.50px;top:1346.19px;color:#2b2b2b;letter-spacing:-0.367px;">0.0</span>
<span class="t" style="left:1740.00px;top:1346.19px;color:#2b2b2b;">1</span>
<span class="t" style="left:1947.50px;top:1346.19px;color:#2b2b2b;letter-spacing:0.106px;">[55.64700828,37.521248101]</span>
<span class="t" style="left:2345.50px;top:1346.19px;color:#2b2b2b;letter-spacing:-0.044px;">Самовывоз</span>

<!-- outer frame -->
<div class="a" style="left:0;top:0;width:2560px;height:3px;background:#c9c9c9;"></div>
<div class="a" style="left:0;top:1437px;width:2560px;height:3px;background:#c9c9c9;"></div>
<div class="a" style="left:0;top:0;width:3px;height:1440px;background:#c9c9c9;"></div>
<div class="a" style="left:2557px;top:0;width:3px;height:1440px;background:#c9c9c9;"></div>
</body></html>
